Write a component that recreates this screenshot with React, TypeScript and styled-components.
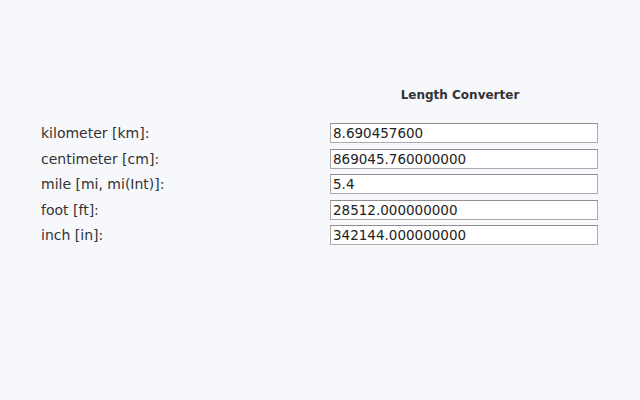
import React from "react";
import styled, { createGlobalStyle } from "styled-components";

const Global = createGlobalStyle`
  html, body { margin: 0; padding: 0; background: #f7f8fc; }
  body { font-family: "DejaVu Sans", Verdana, sans-serif; color: #222; }
`;

const Page = styled.div`
  width: 640px;
  height: 400px;
  background: #f7f8fc;
  padding: 87px 0 0 41px;
  box-sizing: border-box;
`;

const Grid = styled.div`
  display: grid;
  grid-template-columns: 289px 268px;
  row-gap: 5.4px;
  align-items: center;
`;

const Title = styled.h1`
  grid-column: 2;
  margin: 0 0 15px 0;
  padding-right: 8px;
  text-align: center;
  font-size: 12px;
  font-weight: bold;
  color: #333;
  line-height: 16px;
`;

const Label = styled.label`
  grid-column: 1;
  font-size: 14px;
  color: #333;
  line-height: 20px;
`;

const Input = styled.input`
  grid-column: 2;
  box-sizing: border-box;
  width: 268px;
  height: 20px;
  margin: 0;
  padding: 0 2px;
  border: 1px solid #a9a9a9;
  border-top-color: #8e8e8e;
  background: #fff;
  font-family: "DejaVu Sans", Verdana, sans-serif;
  font-size: 13.5px;
  color: #222;
  outline: none;
`;

const rows = [
  ["kilometer [km]:", "8.690457600"],
  ["centimeter [cm]:", "869045.760000000"],
  ["mile [mi, mi(Int)]:", "5.4"],
  ["foot [ft]:", "28512.000000000"],
  ["inch [in]:", "342144.000000000"],
];

export default function App() {
  return (
    <Page>
      <Global />
      <Grid>
        <Title>Length Converter</Title>
        {rows.map(([l, v]) => (
          <React.Fragment key={l}>
            <Label>{l}</Label>
            <Input defaultValue={v} readOnly />
          </React.Fragment>
        ))}
      </Grid>
    </Page>
  );
}
